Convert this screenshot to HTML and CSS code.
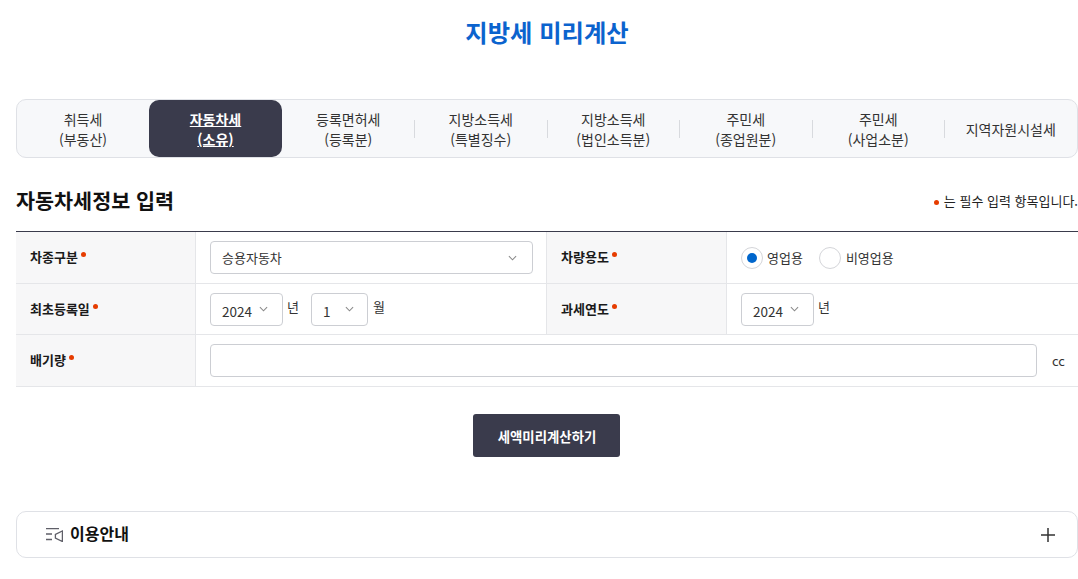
FILE: index.html
```html
<!DOCTYPE html>
<html lang="ko">
<head>
<meta charset="utf-8">
<title>지방세 미리계산</title>
<link rel="stylesheet" href="styles.css">
</head>
<body>
<main class="page">
  <h1 class="title">지방세 미리계산</h1>
  <nav class="tabs">
    <a class="tab first">취득세<br>(부동산)</a>
    <a class="tab active">자동차세<br>(소유)</a>
    <a class="tab">등록면허세<br>(등록분)</a>
    <a class="tab sep">지방소득세<br>(특별징수)</a>
    <a class="tab sep">지방소득세<br>(법인소득분)</a>
    <a class="tab sep">주민세<br>(종업원분)</a>
    <a class="tab sep">주민세<br>(사업소분)</a>
    <a class="tab sep">지역자원시설세</a>
  </nav>
  <div class="section-head">
    <h2 class="section-title">자동차세정보 입력</h2>
    <p class="note"><span class="dot note-dot"></span>는 필수 입력 항목입니다.</p>
  </div>
  <div class="form">
    <div class="row r1">
      <div class="label">차종구분<span class="dot"></span></div>
      <div class="field"><div class="select wide"><span>승용자동차</span><svg class="chev" viewBox="0 0 10 6"><path d="M1 1l4 4 4-4"/></svg></div></div>
      <div class="label left">차량용도<span class="dot"></span></div>
      <div class="field radios">
        <span class="radio on"></span><span class="rlabel">영업용</span>
        <span class="radio"></span><span class="rlabel last">비영업용</span>
      </div>
    </div>
    <div class="row r2">
      <div class="label">최초등록일<span class="dot"></span></div>
      <div class="field dates">
        <div class="select year"><span class="num">2024</span><svg class="chev" viewBox="0 0 10 6"><path d="M1 1l4 4 4-4"/></svg></div><span class="unit">년</span>
        <div class="select month"><span class="num">1</span><svg class="chev" viewBox="0 0 10 6"><path d="M1 1l4 4 4-4"/></svg></div><span class="unit">월</span>
      </div>
      <div class="label left">과세연도<span class="dot"></span></div>
      <div class="field dates">
        <div class="select year"><span class="num">2024</span><svg class="chev" viewBox="0 0 10 6"><path d="M1 1l4 4 4-4"/></svg></div><span class="unit">년</span>
      </div>
    </div>
    <div class="row r3">
      <div class="label">배기량<span class="dot"></span></div>
      <div class="field full"><div class="input"></div><span class="cc">cc</span></div>
    </div>
  </div>
  <div class="actions"><button class="submit">세액미리계산하기</button></div>
  <section class="guide">
    <svg class="guide-icon" viewBox="0 0 17 14"><path d="M0 .7h13M0 6h6M0 11.500h6M16.400 3v10.500l-7-3.500V6.500z"/></svg>
    <strong class="guide-title">이용안내</strong>
    <svg class="plus" viewBox="0 0 14 14"><path d="M7 0v14M0 7h14"/></svg>
  </section>
</main>
</body>
</html>
```
FILE: styles.css
```css
* { box-sizing: border-box; }
html, body { margin: 0; padding: 0; background: #fff; }
body { font-family: "Noto Sans CJK KR", "Noto Sans", sans-serif; color: #222; overflow: hidden; }
.page { width: 1062px; margin-left: 16px; }
.title { margin: 0; padding-top: 14px; height: 99px; text-align: center; font-size: 24.300px; line-height: 36px; font-weight: 700; color: #0b63ce; }
.tabs { display: flex; height: 59px; border: 1px solid #dfe1e6; border-radius: 10px; background: #f7f8fa; }
.tab { position: relative; flex: 0 0 132.5px; display: flex; align-items: center; justify-content: center; text-align: center; font-size: 14px; line-height: 20px; color: #333; border-radius: 10px; height: 57px; }
.tab.first { flex-basis: 132px; }
.tab.active { flex-basis: 133px; background: #3a3b4c; color: #fff; font-weight: 700; text-decoration: underline; }
.tab.sep::before { content: ""; position: absolute; left: -0.1px; top: 20px; height: 18px; width: 1px; background: #d8dade; }
.section-head { display: flex; align-items: center; justify-content: space-between; height: 73px; padding-top: 11px; }
.section-title { margin: 0; font-size: 20.700px; font-weight: 700; color: #111; }
.note { margin: 0; font-size: 13px; color: #222; }
.dot { display: inline-block; width: 5px; height: 5px; border-radius: 50%; background: #e63c00; margin: 0 0 4px 3px; }
.note-dot { vertical-align: 1px; margin: 0 5px 0 0; }
.form { border-top: 1px solid #3a3b4c; }
.row { display: grid; grid-template-columns: 180px 350px 181px 351px; border-bottom: 1px solid #e5e6e9; }
.r1 { height: 52px; }
.r2 { height: 51px; }
.r3 { height: 52px; grid-template-columns: 180px 882px; }
.label { background: #f7f7f8; display: flex; align-items: center; padding: 0 0 2px 14px; font-size: 13px; font-weight: 700; color: #1a1a1a; border-right: 1px solid #e5e6e9; }
.label.left { border-left: 1px solid #e5e6e9; }
.field { display: flex; align-items: center; padding: 0 14px; font-size: 13px; color: #333; }
.select { flex: none; display: flex; align-items: center; justify-content: space-between; height: 33px; border: 1px solid #ccced3; border-radius: 4px; padding: 0 15px 0 11px; background: #fff; }
.wide { width: 323px; }
.year { width: 73px; padding-right: 14px; }
.month { width: 57px; padding-right: 13px; }
.num { font-size: 13.500px; padding-top: 3px; }
.chev { width: 9px; height: 6px; fill: none; stroke: #8a8a8a; stroke-width: 1.200; }
.unit { margin: 0 12px 5px 5px; }
.year + .unit { margin-left: 4px; }
.radio { width: 22px; height: 22px; border: 1px solid #d4d5d9; border-radius: 50%; background: #fff; display: inline-flex; align-items: center; justify-content: center; }
.radio.on::after { content: ""; width: 10px; height: 10px; border-radius: 50%; background: #0066cc; }
.rlabel { margin: 0 16px 0 4px; }
.rlabel.last { margin-left: 5px; }
.full { gap: 14px; padding-right: 13px; }
.input { flex: 1; height: 33px; border: 1px solid #ccced3; border-radius: 4px; }
.cc { flex: none; width: 14px; padding-left: 1px; font-size: 13px; }
.actions { display: flex; justify-content: center; padding: 27px 2px 0 0; height: 124px; }
.submit { width: 147px; height: 43px; border: 0; padding: 0 0 0 2px; border-radius: 3px; background: #3a3b4c; color: #fff; font: 700 13.400px "Noto Sans CJK KR", sans-serif; }
.guide { display: flex; align-items: center; height: 47px; border: 1px solid #dfe1e6; border-radius: 10px; padding: 0 22px 0 29px; }
.guide-icon { width: 17px; height: 14px; fill: none; stroke: #5f5f68; stroke-width: 1.300; }
.guide-title { margin: 0 0 3px 7px; font-size: 16px; font-weight: 700; color: #111; flex: 1; }
.plus { width: 14px; height: 14px; fill: none; stroke: #333; stroke-width: 1.500; }
```
